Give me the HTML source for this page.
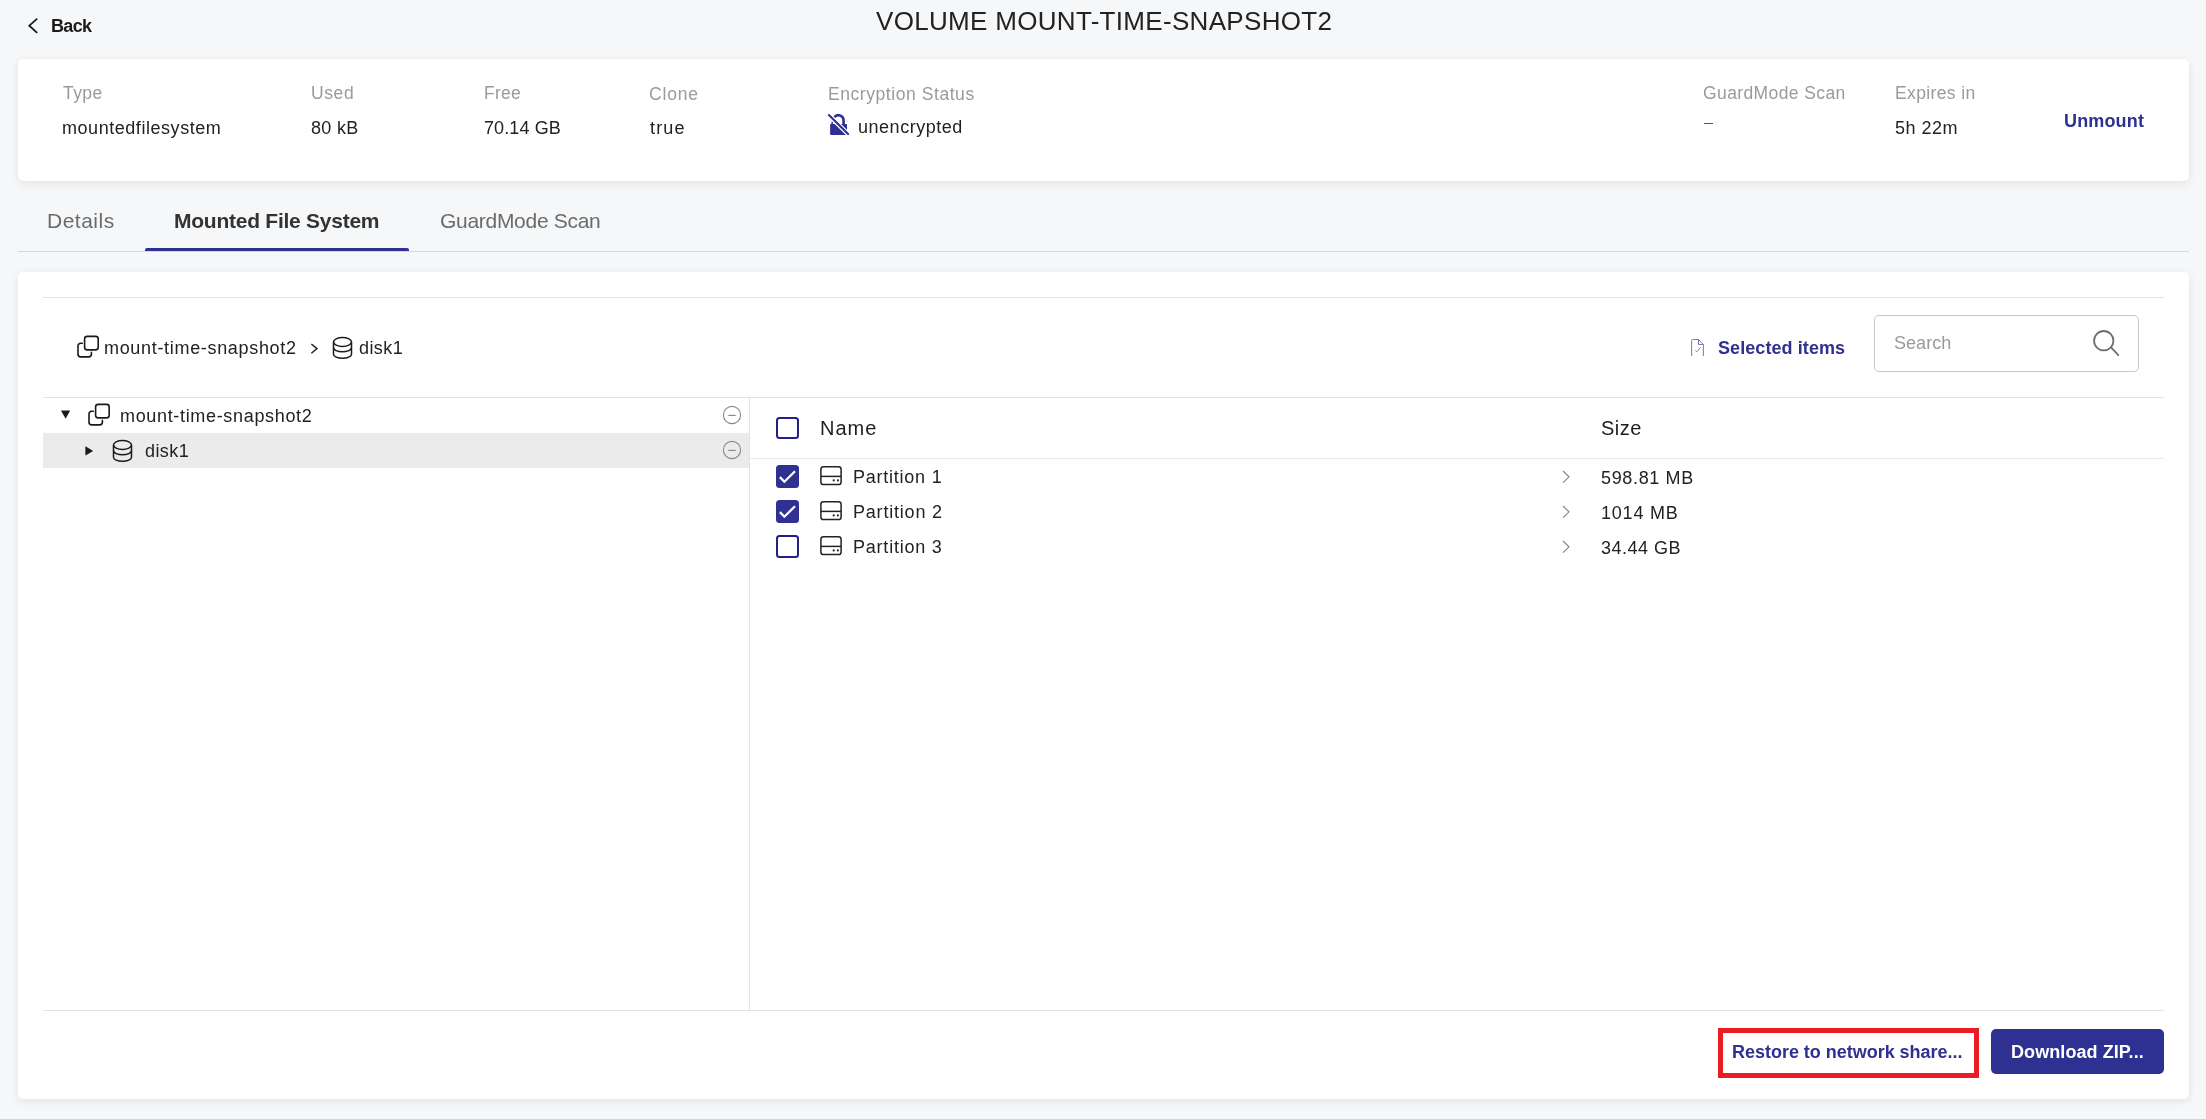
<!DOCTYPE html>
<html><head><meta charset="utf-8">
<style>
html,body{margin:0;padding:0;}
body{width:2206px;height:1119px;background:#f6f7f9;position:relative;overflow:hidden;font-family:"Liberation Sans",sans-serif;color:#222;}
.a{position:absolute;}
.t{position:absolute;line-height:1;white-space:pre;font-family:"Liberation Sans",sans-serif;will-change:transform;}
.card{position:absolute;background:#fff;border-radius:5px;box-shadow:0 2px 8px rgba(0,0,0,0.09);}
.hl{position:absolute;height:1px;background:#dfe2e7;}
svg{position:absolute;overflow:visible;}
</style></head><body>
<div class="card" style="left:18px;top:59px;width:2171px;height:122px"></div>
<div class="a" style="left:18px;top:251px;width:2171px;height:1px;background:#d7d8db"></div>
<div class="a" style="left:145px;top:248px;width:264px;height:3px;background:#2e3192;border-radius:2px 2px 0 0"></div>
<div class="card" style="left:18px;top:272px;width:2171px;height:827px"></div>
<div class="hl" style="left:43px;top:297px;width:2121px"></div>
<div class="hl" style="left:43px;top:397px;width:2121px"></div>
<div class="hl" style="left:43px;top:1010px;width:2121px"></div>
<div class="a" style="left:749px;top:397px;width:1px;height:613px;background:#dfe2e7"></div>
<svg style="left:0;top:0" width="60" height="50"><path d="M37.2,18.6 L29.3,25.7 L37.2,32.8" fill="none" stroke="#1a1a1a" stroke-width="1.8"/></svg>
<svg style="left:822px;top:108px" width="34" height="32" viewBox="0 0 34 32"><path d="M12.2,9.2 A5.3,5.3 0 0 1 21.6,12.4 V16.5" fill="none" stroke="#2e3192" stroke-width="2.6"/><rect x="8.1" y="16" width="16.9" height="10.9" rx="0.8" fill="#2e3192"/><path d="M10.2,13.8 V17" stroke="#2e3192" stroke-width="1.6"/><path d="M6.6,6.9 L26.1,26.1" stroke="#fff" stroke-width="4.4"/><path d="M6.9,7.1 L26.1,26.1" stroke="#2e3192" stroke-width="2.1" stroke-linecap="round"/></svg>
<svg style="left:72px;top:330px" width="32" height="32" viewBox="0 0 32 32"><g fill="none" stroke="#1a1a1a" stroke-width="1.6" stroke-linecap="round"><rect x="12.6" y="6.4" width="13.6" height="13.5" rx="2.6"/><path d="M10.3,13.3 H8.6 A2.6,2.6 0 0 0 6,15.9 V24.3 A2.6,2.6 0 0 0 8.6,26.9 H16.8 A2.6,2.6 0 0 0 19.4,24.3 V22.4"/></g></svg>
<svg style="left:310px;top:343px" width="12" height="16" viewBox="0 0 12 16"><path d="M1.4,1 L7,5.6 L1.4,10.2" fill="none" stroke="#1a1a1a" stroke-width="1.4"/></svg>
<div class="a" style="left:1704px;top:123px;width:9px;height:1.4px;background:#555"></div>
<svg style="left:328px;top:332px" width="30" height="30" viewBox="0 0 30 30"><g fill="none" stroke="#1a1a1a" stroke-width="1.5"><ellipse cx="14.5" cy="10" rx="9" ry="4.4"/><path d="M5.5,10 V22.2 A9,4.1 0 0 0 23.5,22.2 V10"/><path d="M5.5,15.6 A9,4.2 0 0 0 23.5,15.6"/></g></svg>
<svg style="left:1684px;top:332px" width="28" height="30" viewBox="0 0 28 30"><g fill="none" stroke="#2e3192" stroke-width="1" opacity="0.65"><path d="M7.6,23.5 V8.6 Q7.6,7.5 8.7,7.5 H14.5 L19.4,12.5 V23.5"/><path d="M14.5,7.5 V12.5 H19.4"/><path d="M11.4,18.5 L12.9,19.7 L16.5,15.5"/><path d="M7.6,23.5 H8.4 M18.6,23.5 H19.4"/></g></svg>
<div class="a" style="left:1874px;top:315px;width:265px;height:57px;box-sizing:border-box;border:1px solid #c7c7c7;border-radius:5px;background:#fff"></div>
<svg style="left:2085px;top:323px" width="40" height="40" viewBox="0 0 40 40"><g fill="none" stroke="#6e6e6e" stroke-width="1.8"><circle cx="18.75" cy="17.7" r="9.7"/><path d="M26.3,24.7 L33.3,32.2" stroke-linecap="round"/></g></svg>
<div class="a" style="left:43px;top:433px;width:706px;height:35px;background:#ebebeb"></div>
<svg style="left:55px;top:405px" width="20" height="20"><path d="M6,5.5 H15.2 L10.6,13.7 Z" fill="#1a1a1a"/></svg>
<svg style="left:83px;top:398px" width="32" height="32" viewBox="0 0 32 32"><g fill="none" stroke="#1a1a1a" stroke-width="1.6" stroke-linecap="round"><rect x="12.6" y="6.4" width="13.6" height="13.5" rx="2.6"/><path d="M10.3,13.3 H8.6 A2.6,2.6 0 0 0 6,15.9 V24.3 A2.6,2.6 0 0 0 8.6,26.9 H16.8 A2.6,2.6 0 0 0 19.4,24.3 V22.4"/></g></svg>
<svg style="left:720.3px;top:403.0px" width="24" height="24" viewBox="0 0 24 24"><circle cx="12" cy="12" r="8.6" fill="none" stroke="#8a8a8a" stroke-width="1.15"/><path d="M8.3,12.4 H15.7" stroke="#8a8a8a" stroke-width="1.2"/></svg>
<svg style="left:80px;top:441px" width="20" height="20"><path d="M5.4,5.3 L13.2,9.9 L5.4,14.5 Z" fill="#1a1a1a"/></svg>
<svg style="left:108px;top:435px" width="30" height="30" viewBox="0 0 30 30"><g fill="none" stroke="#1a1a1a" stroke-width="1.5"><ellipse cx="14.5" cy="10" rx="9" ry="4.4"/><path d="M5.5,10 V22.2 A9,4.1 0 0 0 23.5,22.2 V10"/><path d="M5.5,15.6 A9,4.2 0 0 0 23.5,15.6"/></g></svg>
<svg style="left:720.3px;top:438.0px" width="24" height="24" viewBox="0 0 24 24"><circle cx="12" cy="12" r="8.6" fill="none" stroke="#8a8a8a" stroke-width="1.15"/><path d="M8.3,12.4 H15.7" stroke="#8a8a8a" stroke-width="1.2"/></svg>
<div class="a" style="left:776px;top:417px;width:23px;height:22px;box-sizing:border-box;border:2px solid #20208a;border-radius:3.5px;background:#fff"></div>
<div class="a" style="left:750px;top:458px;width:1414px;height:1px;background:#e9e9e9"></div>
<div class="a" style="left:776px;top:465px;width:23px;height:23px;border-radius:3.5px;background:#2e3192"></div><svg style="left:776px;top:465px" width="23" height="23" viewBox="0 0 23 23"><path d="M3.9,12.1 L8.4,16.7 L19,6.2" fill="none" stroke="#fff" stroke-width="2.3"/></svg>
<svg style="left:815px;top:460px" width="32" height="32" viewBox="0 0 32 32"><g fill="none" stroke="#222" stroke-width="1.5"><rect x="5.9" y="6.7" width="20.2" height="17.9" rx="2.6"/><path d="M5.9,16.4 H26.1"/></g><circle cx="18.7" cy="20.4" r="1.05" fill="#222"/><circle cx="22.9" cy="20.4" r="1.05" fill="#222"/></svg>
<svg style="left:1561.5px;top:470px" width="12" height="16" viewBox="0 0 12 16"><path d="M1,1 L7,6.8 L1,12.6" fill="none" stroke="#808080" stroke-width="1.1"/></svg>
<div class="a" style="left:776px;top:500px;width:23px;height:23px;border-radius:3.5px;background:#2e3192"></div><svg style="left:776px;top:500px" width="23" height="23" viewBox="0 0 23 23"><path d="M3.9,12.1 L8.4,16.7 L19,6.2" fill="none" stroke="#fff" stroke-width="2.3"/></svg>
<svg style="left:815px;top:495px" width="32" height="32" viewBox="0 0 32 32"><g fill="none" stroke="#222" stroke-width="1.5"><rect x="5.9" y="6.7" width="20.2" height="17.9" rx="2.6"/><path d="M5.9,16.4 H26.1"/></g><circle cx="18.7" cy="20.4" r="1.05" fill="#222"/><circle cx="22.9" cy="20.4" r="1.05" fill="#222"/></svg>
<svg style="left:1561.5px;top:505px" width="12" height="16" viewBox="0 0 12 16"><path d="M1,1 L7,6.8 L1,12.6" fill="none" stroke="#808080" stroke-width="1.1"/></svg>
<div class="a" style="left:776px;top:535px;width:23px;height:23px;box-sizing:border-box;border:2px solid #20208a;border-radius:3.5px;background:#fff"></div>
<svg style="left:815px;top:530px" width="32" height="32" viewBox="0 0 32 32"><g fill="none" stroke="#222" stroke-width="1.5"><rect x="5.9" y="6.7" width="20.2" height="17.9" rx="2.6"/><path d="M5.9,16.4 H26.1"/></g><circle cx="18.7" cy="20.4" r="1.05" fill="#222"/><circle cx="22.9" cy="20.4" r="1.05" fill="#222"/></svg>
<svg style="left:1561.5px;top:540px" width="12" height="16" viewBox="0 0 12 16"><path d="M1,1 L7,6.8 L1,12.6" fill="none" stroke="#808080" stroke-width="1.1"/></svg>
<div class="a" style="left:1718px;top:1028px;width:261px;height:50px;box-sizing:border-box;border:5px solid #ec1c24;background:#fff"></div>
<div class="a" style="left:1991px;top:1029px;width:173px;height:45px;border-radius:5px;background:#2e3192"></div>
<div class="t" style="left:51.20px;top:17px;font-size:18px;font-weight:700;color:#1a1a1a;letter-spacing:-0.667px">Back</div>
<div class="t" style="left:875.60px;top:8px;font-size:26px;font-weight:400;color:#222;letter-spacing:0.312px">VOLUME MOUNT-TIME-SNAPSHOT2</div>
<div class="t" style="left:63.20px;top:85px;font-size:17.5px;font-weight:400;color:#9a9a9a;letter-spacing:0.433px">Type</div>
<div class="t" style="left:311.00px;top:85px;font-size:17.5px;font-weight:400;color:#9a9a9a;letter-spacing:0.600px">Used</div>
<div class="t" style="left:483.50px;top:85px;font-size:17.5px;font-weight:400;color:#9a9a9a;letter-spacing:0.267px">Free</div>
<div class="t" style="left:649.00px;top:86px;font-size:17.5px;font-weight:400;color:#9a9a9a;letter-spacing:0.800px">Clone</div>
<div class="t" style="left:827.50px;top:86px;font-size:17.5px;font-weight:400;color:#9a9a9a;letter-spacing:0.562px">Encryption Status</div>
<div class="t" style="left:1703.40px;top:85px;font-size:17.5px;font-weight:400;color:#9a9a9a;letter-spacing:0.392px">GuardMode Scan</div>
<div class="t" style="left:1895.20px;top:85px;font-size:17.5px;font-weight:400;color:#9a9a9a;letter-spacing:0.367px">Expires in</div>
<div class="t" style="left:62.30px;top:119px;font-size:18px;font-weight:400;color:#222;letter-spacing:0.544px">mountedfilesystem</div>
<div class="t" style="left:311.00px;top:119px;font-size:18px;font-weight:400;color:#222;letter-spacing:0.300px">80 kB</div>
<div class="t" style="left:483.50px;top:119px;font-size:18px;font-weight:400;color:#222;letter-spacing:0.114px">70.14 GB</div>
<div class="t" style="left:650.00px;top:119px;font-size:18px;font-weight:400;color:#222;letter-spacing:1.133px">true</div>
<div class="t" style="left:858.30px;top:118px;font-size:18px;font-weight:400;color:#222;letter-spacing:0.530px">unencrypted</div>
<div class="t" style="left:1895.20px;top:119px;font-size:18px;font-weight:400;color:#222;letter-spacing:0.480px">5h 22m</div>
<div class="t" style="left:2064.10px;top:112px;font-size:18px;font-weight:700;color:#2e3192;letter-spacing:0.150px">Unmount</div>
<div class="t" style="left:47.30px;top:210px;font-size:21px;font-weight:400;color:#6b6b6b;letter-spacing:0.500px">Details</div>
<div class="t" style="left:174.40px;top:210px;font-size:21px;font-weight:700;color:#333;letter-spacing:-0.250px">Mounted File System</div>
<div class="t" style="left:439.60px;top:210px;font-size:21px;font-weight:400;color:#6b6b6b;letter-spacing:-0.292px">GuardMode Scan</div>
<div class="t" style="left:103.70px;top:339px;font-size:18px;font-weight:400;color:#222;letter-spacing:0.679px">mount-time-snapshot2</div>
<div class="t" style="left:359.40px;top:339px;font-size:18px;font-weight:400;color:#222;letter-spacing:0.425px">disk1</div>
<div class="t" style="left:1718.00px;top:339px;font-size:18px;font-weight:700;color:#2e3192;letter-spacing:0.077px">Selected items</div>
<div class="t" style="left:1893.50px;top:334px;font-size:18px;font-weight:400;color:#9a9a9a;letter-spacing:0.040px">Search</div>
<div class="t" style="left:119.80px;top:407px;font-size:18px;font-weight:400;color:#222;letter-spacing:0.668px">mount-time-snapshot2</div>
<div class="t" style="left:144.80px;top:442px;font-size:18px;font-weight:400;color:#222;letter-spacing:0.425px">disk1</div>
<div class="t" style="left:819.60px;top:418px;font-size:20px;font-weight:400;color:#1e1e1e;letter-spacing:0.967px">Name</div>
<div class="t" style="left:1600.80px;top:418px;font-size:20px;font-weight:400;color:#1e1e1e;letter-spacing:0.467px">Size</div>
<div class="t" style="left:852.60px;top:468px;font-size:18px;font-weight:400;color:#222;letter-spacing:0.760px">Partition 1</div>
<div class="t" style="left:852.60px;top:503px;font-size:18px;font-weight:400;color:#222;letter-spacing:0.800px">Partition 2</div>
<div class="t" style="left:852.60px;top:538px;font-size:18px;font-weight:400;color:#222;letter-spacing:0.780px">Partition 3</div>
<div class="t" style="left:1600.80px;top:469px;font-size:18px;font-weight:400;color:#222;letter-spacing:0.650px">598.81 MB</div>
<div class="t" style="left:1600.80px;top:504px;font-size:18px;font-weight:400;color:#222;letter-spacing:0.800px">1014 MB</div>
<div class="t" style="left:1600.80px;top:539px;font-size:18px;font-weight:400;color:#222;letter-spacing:0.486px">34.44 GB</div>
<div class="t" style="left:1731.70px;top:1043px;font-size:18px;font-weight:700;color:#2e3192;letter-spacing:-0.023px">Restore to network share...</div>
<div class="t" style="left:2010.80px;top:1043px;font-size:18px;font-weight:700;color:#fff;letter-spacing:0.079px">Download ZIP...</div>
</body></html>
